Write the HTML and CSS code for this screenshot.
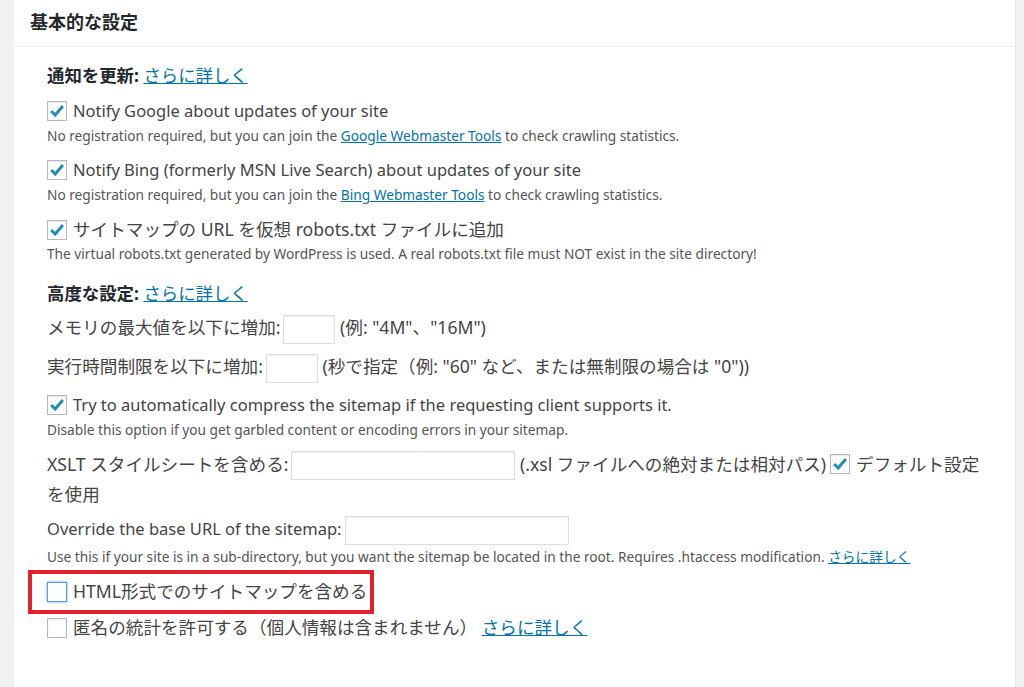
FILE: index.html
```html
<!DOCTYPE html>
<html lang="ja">
<head>
    <meta charset="UTF-8">
    <meta name="viewport" content="width=device-width, initial-scale=1.0">
    <title>基本的な設定</title>
    <link rel="stylesheet" href="styles.css">
</head>
<body>
    <div class="postbox">
        <h3 class="hndle">基本的な設定</h3>
        <div class="inside">
            <p class="group-title"><b>通知を更新:</b> <a href="#">さらに詳しく</a></p>
            <ul class="options">
                <li>
                    <label class="en"><span class="cb checked"><svg viewBox="0 0 20 20"><path d="M3.5 10 L8 14.5 L16.5 4.5"/></svg></span>Notify Google about updates of your site</label>
                    <small>No registration required, but you can join the <a href="#">Google Webmaster Tools</a> to check crawling statistics.</small>
                </li>
                <li>
                    <label class="en"><span class="cb checked"><svg viewBox="0 0 20 20"><path d="M3.5 10 L8 14.5 L16.5 4.5"/></svg></span>Notify Bing (formerly MSN Live Search) about updates of your site</label>
                    <small>No registration required, but you can join the <a href="#">Bing Webmaster Tools</a> to check crawling statistics.</small>
                </li>
                <li>
                    <label><span class="cb checked"><svg viewBox="0 0 20 20"><path d="M3.5 10 L8 14.5 L16.5 4.5"/></svg></span>サイトマップの URL を仮想 robots.txt ファイルに追加</label>
                    <small>The virtual robots.txt generated by WordPress is used. A real robots.txt file must NOT exist in the site directory!</small>
                </li>
            </ul>

            <p class="group-title second"><b>高度な設定:</b> <a href="#">さらに詳しく</a></p>
            <ul class="options">
                <li class="field-row">
                    <label>メモリの最大値を以下に増加:</label><input type="text" class="tiny"> (例: "4M"、"16M")
                </li>
                <li class="field-row">
                    <label>実行時間制限を以下に増加:</label><input type="text" class="tiny"> (秒で指定（例: "60" など、または無制限の場合は "0"))
                </li>
                <li>
                    <label class="en"><span class="cb checked"><svg viewBox="0 0 20 20"><path d="M3.5 10 L8 14.5 L16.5 4.5"/></svg></span>Try to automatically compress the sitemap if the requesting client supports it.</label>
                    <small>Disable this option if you get garbled content or encoding errors in your sitemap.</small>
                </li>
                <li class="field-row wrap-row">
                    <label>XSLT スタイルシートを含める:</label><input type="text" class="wide"> (.xsl ファイルへの絶対または相対パス)<span class="cb checked"><svg viewBox="0 0 20 20"><path d="M3.5 10 L8 14.5 L16.5 4.5"/></svg></span>デフォルト設定を使用
                </li>
                <li class="base-url">
                    <div class="field-row en"><label>Override the base URL of the sitemap:</label><input type="text" class="wide"></div>
                    <small>Use this if your site is in a sub-directory, but you want the sitemap be located in the root. Requires .htaccess modification. <a href="#">さらに詳しく</a></small>
                </li>
                <li class="marked">
                    <label><span class="cb focus"></span>HTML形式でのサイトマップを含める</label>
                </li>
                <li>
                    <label><span class="cb"></span>匿名の統計を許可する（個人情報は含まれません） <a href="#">さらに詳しく</a></label>
                </li>
            </ul>
        </div>
    </div>
</body>
</html>
```

FILE: styles.css
```css
body {
    margin: 0;
    background-color: #f1f1f1;
    font-family: "Noto Sans", "Noto Sans CJK JP", sans-serif;
    color: #444;
}
.postbox {
    margin-left: 14px;
    width: 1001px;
    min-height: 100vh;
    background-color: #fff;
    border-right: 1px solid #e5e5e5;
}
.hndle {
    margin: 0;
    height: 46px;
    padding-left: 16px;
    line-height: 44px;
    font-size: 18px;
    font-weight: bold;
    color: #23282d;
    border-bottom: 1px solid #eee;
}
.inside {
    padding: 14px 30px 0 33px;
}
a {
    color: #0073aa;
}
.group-title {
    margin: 0 0 8px;
    line-height: 28px;
    font-size: 17.4px;
}
.group-title b {
    color: #23282d;
}
.group-title.second {
    margin: 15px 0 6px;
}
.options {
    list-style-type: none;
    margin: 0;
    padding: 0;
}
.options li {
    margin-bottom: 10px;
    font-size: 17.6px;
    line-height: 28px;
}
.options label {
    display: block;
}
.options .en {
    font-size: 16.5px;
}
.options small {
    display: block;
    margin-top: 1px;
    font-size: 13.7px;
    line-height: 20px;
    color: #555;
}
.cb {
    display: inline-block;
    box-sizing: border-box;
    width: 20px;
    height: 20px;
    margin: -3px 6px 0 0;
    vertical-align: middle;
    border: 1px solid #b4b9be;
    background-color: #fff;
    box-shadow: inset 0 1px 2px rgba(0, 0, 0, 0.1);
}
.cb svg {
    display: block;
    width: 18px;
    height: 18px;
}
.cb svg path {
    fill: none;
    stroke: #1e8cbe;
    stroke-width: 3.2;
}
.cb.focus {
    border-color: #5b9dd9;
    box-shadow: 0 0 2px rgba(30, 140, 190, 0.8);
}
.field-row {
    line-height: 29px;
}
.options li.field-row {
    margin-bottom: 8px;
}
.field-row label {
    display: inline;
}
.field-row input {
    box-sizing: border-box;
    height: 29px;
    margin: 0 0 0 3px;
    padding: 3px 5px;
    vertical-align: middle;
    border: 1px solid #ddd;
    box-shadow: inset 0 1px 2px rgba(0, 0, 0, 0.07);
    background-color: #fff;
    font-size: 14px;
}
.field-row input.tiny {
    width: 52px;
}
.field-row input.wide {
    width: 224px;
}
.options li.wrap-row {
    line-height: 28px;
    margin-bottom: 6px;
}
.wrap-row .cb {
    margin-left: 4px;
}
.base-url small {
    margin-top: 2px;
}
.marked {
    position: relative;
}
.options li.marked {
    margin-bottom: 8px;
}
.marked::after {
    content: "";
    position: absolute;
    left: -19px;
    top: -7px;
    width: 346px;
    height: 44px;
    box-sizing: border-box;
    border: 4px solid #e3202c;
}
```
